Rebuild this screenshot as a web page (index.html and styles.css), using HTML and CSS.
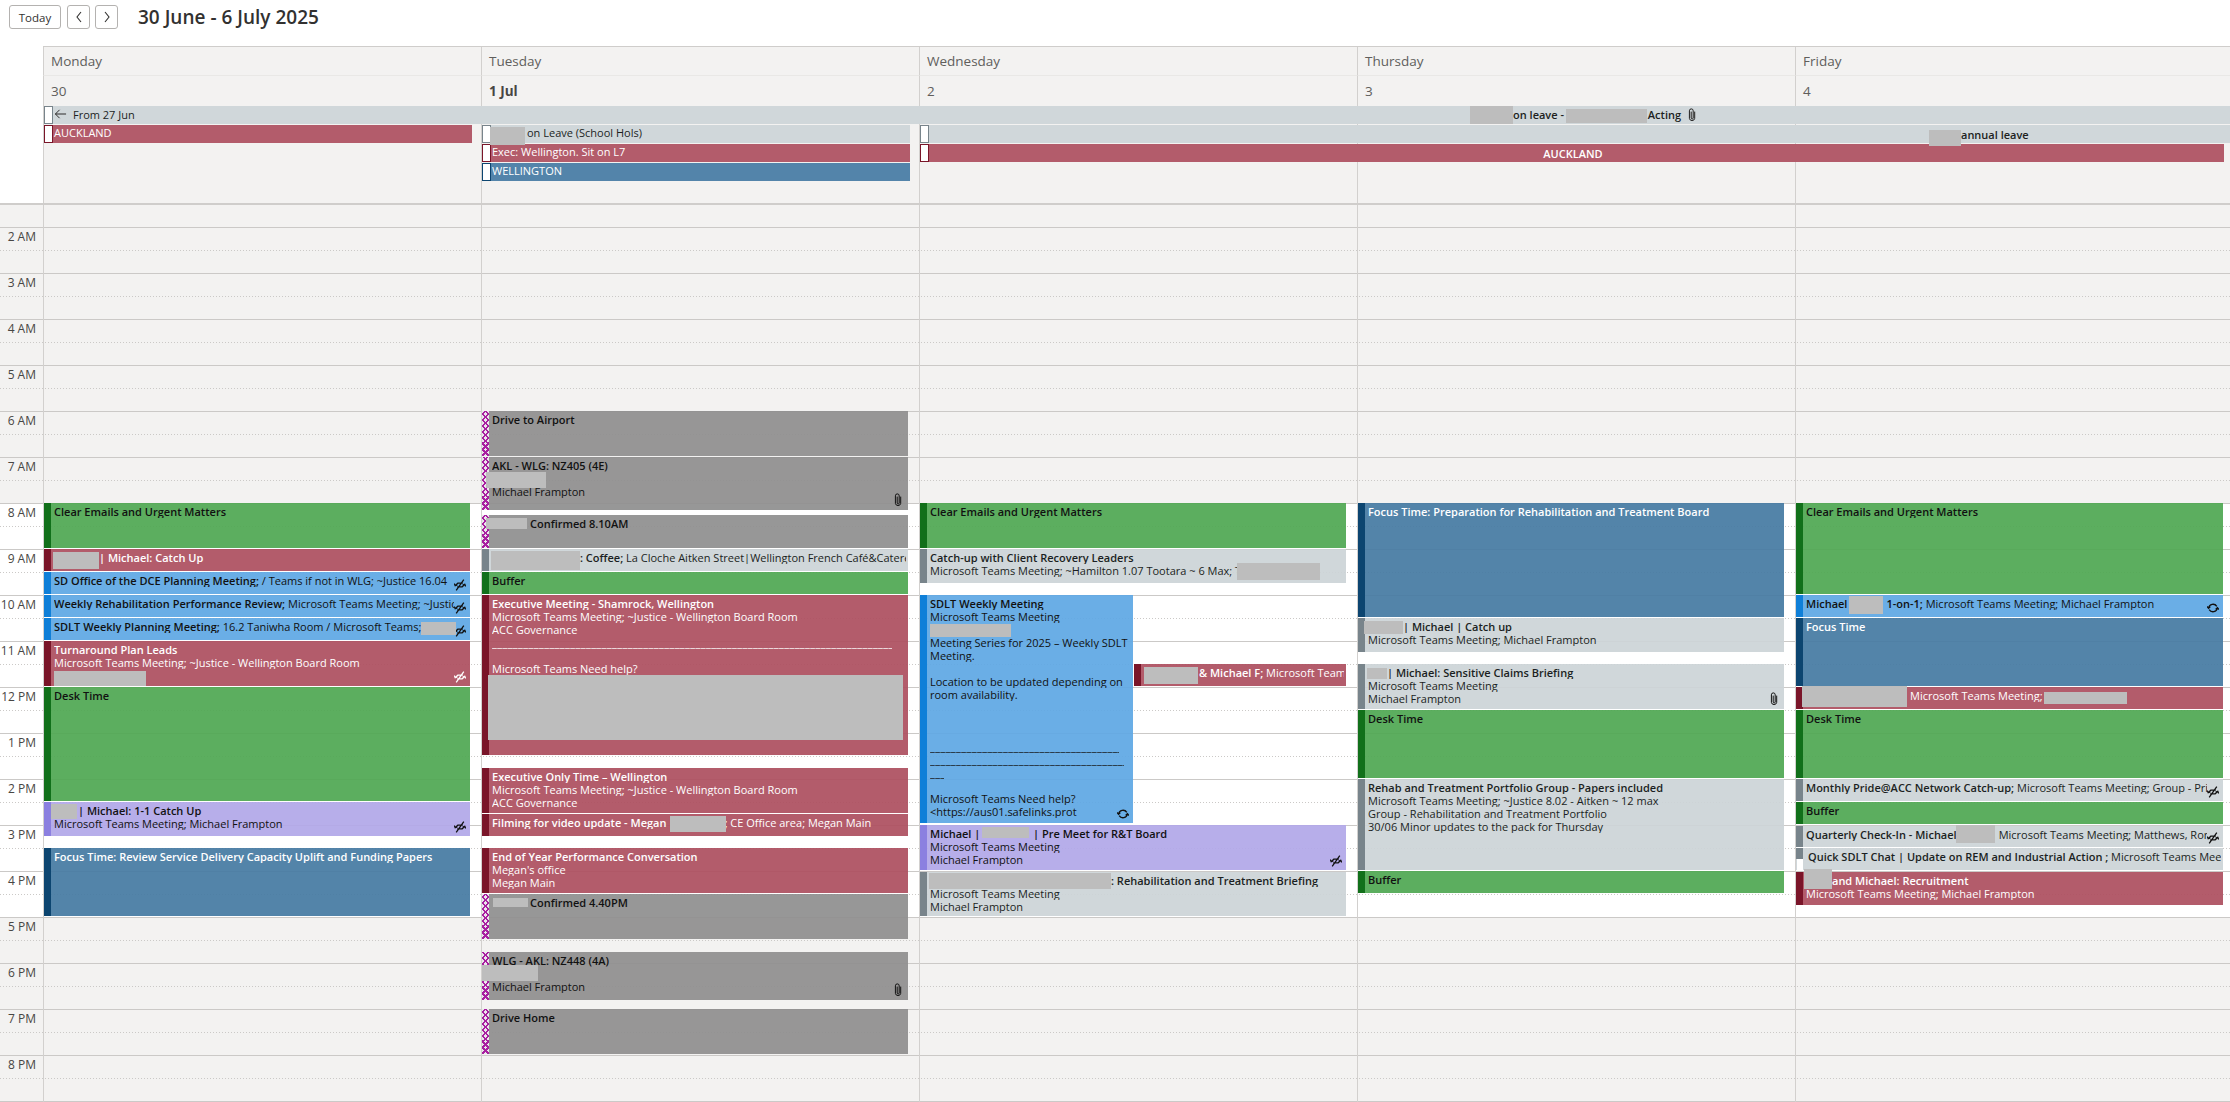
FILE: index.html
```html
<!DOCTYPE html>
<html lang="en">
<head>
<meta charset="utf-8">
<title>Calendar - Work week</title>
<link rel="stylesheet" href="styles.css">
</head>
<body>
<svg class="defs" aria-hidden="true">
  <symbol id="nosync" viewBox="0 0 12 12">
    <path d="M1.2 6.800 3.800 4.200H8.800M0.300 4.600l.9 2.200 2.200-.8M10.800 5.200 8.200 7.800H3.200M11.700 7.400l-.9-2.200-2.200.8M2.200 11.300 9.800.7" fill="none" stroke="currentColor" stroke-width="1.300"/>
  </symbol>
  <symbol id="sync" viewBox="0 0 12 12">
    <path d="M1.600 6A4.400 4.200 0 0 1 9.800 4.400M10.400 6A4.400 4.200 0 0 1 2.200 7.600M0 4.400 1.600 6.400 3.400 4.600M12 7.600 10.400 5.600 8.600 7.400" fill="none" stroke="currentColor" stroke-width="1.300"/>
  </symbol>
  <symbol id="clip" viewBox="0 0 8 14">
    <path d="M3.200 3.600V10a1 1 0 0 0 2 0V2.800a1.900 1.900 0 0 0-3.800 0V10.400a2.700 2.700 0 0 0 5.300 0V3.600" fill="none" stroke="currentColor" stroke-width="1"/>
  </symbol>
</svg>

<header class="top">
  <button class="btn today">Today</button>
  <button class="btn nav"><svg viewBox="0 0 10 14"><path d="M7 2 3 7l4 5" fill="none" stroke="currentColor" stroke-width="1.100"/></svg></button>
  <button class="btn nav"><svg viewBox="0 0 10 14"><path d="m3 2 4 5-4 5" fill="none" stroke="currentColor" stroke-width="1.100"/></svg></button>
  <h1 class="title">30 June - 6 July 2025</h1>
</header>

<section class="head">
  <div class="corner"></div>
  <div class="col c1"></div><div class="col c2"></div><div class="col c3"></div><div class="col c4"></div><div class="col c5"></div>

  <div class="dn c1">Monday</div><div class="dn c2">Tuesday</div><div class="dn c3">Wednesday</div><div class="dn c4">Thursday</div><div class="dn c5">Friday</div>
  <div class="dt c1">30</div><div class="dt c2 cur">1 Jul</div><div class="dt c3">2</div><div class="dt c4">3</div><div class="dt c5">4</div>

  <div class="ad n r1 from1">
    <svg class="arrow" viewBox="0 0 14 12"><path d="M13 6H1.500M6 1.500 1.500 6 6 10.500" fill="none" stroke="currentColor" stroke-width="1"/></svg>
    <span class="from">From 27 Jun</span>
    <strong class="ad-mid">on leave - <i class="gap" style="width:81px"></i>Acting</strong>
    <svg class="ic-inline"><use href="#clip"/></svg>
  </div>
  <div class="ad r c1 r2 end">AUCKLAND</div>
  <div class="ad n c2 r2 end"><i class="gap" style="width:35px"></i>on Leave (School Hols)</div>
  <div class="ad n wf r2"><strong class="ad-late">annual leave</strong></div>
  <div class="ad r c2 r3 end">Exec: Wellington. Sit on L7</div>
  <div class="ad r wf r3 endf"><strong class="ad-center">AUCKLAND</strong></div>
  <div class="ad s c2 r4 end">WELLINGTON</div>

  <i class="rd" style="left:490px;top:80px;width:35px;height:18px"></i>
  <i class="rd" style="left:1470px;top:59px;width:43px;height:18px"></i>
  <i class="rd" style="left:1566px;top:62px;width:81px;height:14px"></i>
  <i class="rd" style="left:1929px;top:83px;width:32px;height:16px"></i>
</section>

<section class="grid">
  <div class="rows">
    <div class="hr first"></div>
    <div class="hr"><span>2 AM</span></div>
    <div class="hr"><span>3 AM</span></div>
    <div class="hr"><span>4 AM</span></div>
    <div class="hr"><span>5 AM</span></div>
    <div class="hr"><span>6 AM</span></div>
    <div class="hr"><span>7 AM</span></div>
    <div class="hr work"><span>8 AM</span></div>
    <div class="hr work"><span>9 AM</span></div>
    <div class="hr work"><span>10 AM</span></div>
    <div class="hr work"><span>11 AM</span></div>
    <div class="hr work"><span>12 PM</span></div>
    <div class="hr work"><span>1 PM</span></div>
    <div class="hr work"><span>2 PM</span></div>
    <div class="hr work"><span>3 PM</span></div>
    <div class="hr work"><span>4 PM</span></div>
    <div class="hr"><span>5 PM</span></div>
    <div class="hr"><span>6 PM</span></div>
    <div class="hr"><span>7 PM</span></div>
    <div class="hr"><span>8 PM</span></div>
  </div>

  <div class="day c1">
    <article class="ev g" style="top:298px;height:45px"><div class="l"><b>Clear Emails and Urgent Matters</b></div></article>
    <article class="ev r" style="top:344px;height:22px"><div class="l"><i class="gap" style="width:45px"></i><b>| Michael: Catch Up</b></div></article>
    <article class="ev b ico" style="top:367px;height:22px"><div class="l"><b>SD Office of the DCE Planning Meeting;</b> / Teams if not in WLG; ~Justice 16.04</div><svg class="ic ns"><use href="#nosync"/></svg></article>
    <article class="ev b ico" style="top:390px;height:22px"><div class="l"><b>Weekly Rehabilitation Performance Review;</b> Microsoft Teams Meeting; ~Justice - Wellington</div><svg class="ic ns"><use href="#nosync"/></svg></article>
    <article class="ev b ico" style="top:413px;height:22px"><div class="l"><b>SDLT Weekly Planning Meeting;</b> 16.2 Taniwha Room / Microsoft Teams;</div><svg class="ic ns"><use href="#nosync"/></svg></article>
    <article class="ev r" style="top:436px;height:45px"><div class="l"><b>Turnaround Plan Leads</b></div><div class="l">Microsoft Teams Meeting; ~Justice - Wellington Board Room</div><svg class="ic ns"><use href="#nosync"/></svg></article>
    <article class="ev g" style="top:482px;height:114px"><div class="l"><b>Desk Time</b></div></article>
    <article class="ev p" style="top:597px;height:34px"><div class="l"><i class="gap" style="width:24px"></i><b>| Michael: 1-1 Catch Up</b></div><div class="l">Microsoft Teams Meeting; Michael Frampton</div><svg class="ic ns"><use href="#nosync"/></svg></article>
    <article class="ev s" style="top:643px;height:68px"><div class="l"><b>Focus Time: Review Service Delivery Capacity Uplift and Funding Papers</b></div></article>
    <i class="rd" style="left:9px;top:347px;width:46px;height:17px"></i>
    <i class="rd" style="left:377px;top:417px;width:35px;height:13px"></i>
    <i class="rd" style="left:10px;top:466px;width:92px;height:15px"></i>
    <i class="rd" style="left:7px;top:599px;width:26px;height:15px"></i>
  </div>

  <div class="day c2">
    <article class="ev h" style="top:206px;height:45px"><div class="l"><b>Drive to Airport</b></div></article>
    <article class="ev h" style="top:252px;height:53px"><div class="l"><b>AKL - WLG: NZ405 (4E)</b></div><div class="l">&nbsp;</div><div class="l">Michael Frampton</div><svg class="ic cl"><use href="#clip"/></svg></article>
    <article class="ev h" style="top:310px;height:33px"><div class="l"><i class="gap" style="width:38px"></i><b>Confirmed 8.10AM</b></div></article>
    <article class="ev n" style="top:344px;height:22px"><div class="l"><i class="gap" style="width:88px"></i><b>: Coffee;</b> La Cloche Aitken Street|Wellington French Café&amp;Caterers</div></article>
    <article class="ev g" style="top:367px;height:22px"><div class="l"><b>Buffer</b></div></article>
    <article class="ev r" style="top:390px;height:160px"><div class="l"><b>Executive Meeting - Shamrock, Wellington</b></div><div class="l">Microsoft Teams Meeting; ~Justice - Wellington Board Room</div><div class="l">ACC Governance</div><div class="l rule w400">________________________________________________________________________________________</div><div class="l">&nbsp;</div><div class="l">Microsoft Teams Need help?</div></article>
    <article class="ev r" style="top:563px;height:45px"><div class="l"><b>Executive Only Time – Wellington</b></div><div class="l">Microsoft Teams Meeting; ~Justice - Wellington Board Room</div><div class="l">ACC Governance</div></article>
    <article class="ev r" style="top:609px;height:22px"><div class="l"><b>Filming for video update - Megan</b><i class="gap" style="width:58px"></i><b>;</b> CE Office area; Megan Main</div></article>
    <article class="ev r" style="top:643px;height:45px"><div class="l"><b>End of Year Performance Conversation</b></div><div class="l">Megan's office</div><div class="l">Megan Main</div></article>
    <article class="ev h" style="top:689px;height:45px"><div class="l"><i class="gap" style="width:38px"></i><b>Confirmed 4.40PM</b></div></article>
    <article class="ev h" style="top:747px;height:48px"><div class="l"><b>WLG - AKL: NZ448 (4A)</b></div><div class="l">&nbsp;</div><div class="l">Michael Frampton</div><svg class="ic cl"><use href="#clip"/></svg></article>
    <article class="ev h" style="top:804px;height:45px"><div class="l"><b>Drive Home</b></div></article>
    <i class="rd" style="left:4px;top:267px;width:60px;height:16px"></i>
    <i class="rd" style="left:4px;top:313px;width:41px;height:11px"></i>
    <i class="rd" style="left:9px;top:346px;width:89px;height:19px"></i>
    <i class="rd" style="left:6px;top:470px;width:415px;height:65px"></i>
    <i class="rd" style="left:188px;top:611px;width:56px;height:16px"></i>
    <i class="rd" style="left:11px;top:693px;width:35px;height:9px"></i>
    <i class="rd" style="left:0;top:760px;width:56px;height:16px"></i>
  </div>

  <div class="day c3">
    <article class="ev g" style="top:298px;height:45px"><div class="l"><b>Clear Emails and Urgent Matters</b></div></article>
    <article class="ev n" style="top:344px;height:34px"><div class="l"><b>Catch-up with Client Recovery Leaders</b></div><div class="l">Microsoft Teams Meeting; ~Hamilton 1.07 Tootara ~ 6 Max; T</div></article>
    <article class="ev b half" style="top:390px;height:228px">
      <div class="l"><b>SDLT Weekly Meeting</b></div><div class="l">Microsoft Teams Meeting</div><div class="l">&nbsp;</div>
      <div class="l">Meeting Series for 2025 – Weekly SDLT</div><div class="l">Meeting.</div><div class="l">&nbsp;</div>
      <div class="l">Location to be updated depending on</div><div class="l">room availability.</div>
      <div class="l">&nbsp;</div><div class="l">&nbsp;</div><div class="l">&nbsp;</div>
      <div class="l rule w189">________________________________________________</div>
      <div class="l rule w194">________________________________________________</div>
      <div class="l rule w14">___________</div>
      <div class="l">&nbsp;</div>
      <div class="l">Microsoft Teams Need help?</div>
      <div class="l">&lt;https://aus01.safelinks.prot</div>
      <svg class="ic sy"><use href="#sync"/></svg>
    </article>
    <article class="ev r rest" style="top:459px;height:22px"><div class="l"><i class="gap" style="width:55px"></i><b>&amp; Michael F;</b> Microsoft Teams Meeting</div></article>
    <article class="ev p" style="top:620px;height:45px"><div class="l"><b>Michael | <i class="gap" style="width:47px"></i> | Pre Meet for R&amp;T Board</b></div><div class="l">Microsoft Teams Meeting</div><div class="l">Michael Frampton</div><svg class="ic ns"><use href="#nosync"/></svg></article>
    <article class="ev n" style="top:667px;height:44px"><div class="l"><i class="gap" style="width:181px"></i><b>: Rehabilitation and Treatment Briefing</b></div><div class="l">Microsoft Teams Meeting</div><div class="l">Michael Frampton</div></article>
    <i class="rd" style="left:317px;top:358px;width:83px;height:17px"></i>
    <i class="rd" style="left:10px;top:419px;width:81px;height:13px"></i>
    <i class="rd" style="left:224px;top:462px;width:54px;height:17px"></i>
    <i class="rd" style="left:62px;top:622px;width:47px;height:11px"></i>
    <i class="rd" style="left:9px;top:668px;width:182px;height:16px"></i>
  </div>

  <div class="day c4">
    <article class="ev s" style="top:298px;height:114px"><div class="l"><b>Focus Time: Preparation for Rehabilitation and Treatment Board</b></div></article>
    <article class="ev n" style="top:413px;height:34px"><div class="l"><i class="gap" style="width:35px"></i><b>| Michael | Catch up</b></div><div class="l">Microsoft Teams Meeting; Michael Frampton</div></article>
    <article class="ev n" style="top:459px;height:45px"><div class="l"><i class="gap" style="width:19px"></i><b>| Michael: Sensitive Claims Briefing</b></div><div class="l">Microsoft Teams Meeting</div><div class="l">Michael Frampton</div><svg class="ic cl"><use href="#clip"/></svg></article>
    <article class="ev g" style="top:505px;height:68px"><div class="l"><b>Desk Time</b></div></article>
    <article class="ev n" style="top:574px;height:91px"><div class="l"><b>Rehab and Treatment Portfolio Group - Papers included</b></div><div class="l">Microsoft Teams Meeting; ~Justice 8.02 - Aitken ~ 12 max</div><div class="l">Group - Rehabilitation and Treatment Portfolio</div><div class="l">30/06 Minor updates to the pack for Thursday</div></article>
    <article class="ev g" style="top:666px;height:22px"><div class="l"><b>Buffer</b></div></article>
    <i class="rd" style="left:6px;top:416px;width:39px;height:13px"></i>
    <i class="rd" style="left:9px;top:463px;width:20px;height:11px"></i>
  </div>

  <div class="day c5">
    <article class="ev g" style="top:298px;height:91px"><div class="l"><b>Clear Emails and Urgent Matters</b></div></article>
    <article class="ev b" style="top:390px;height:22px"><div class="l"><b>Michael<i class="gap" style="width:39px"></i>1-on-1;</b> Microsoft Teams Meeting; Michael Frampton</div><svg class="ic sy"><use href="#sync"/></svg></article>
    <article class="ev s" style="top:413px;height:68px"><div class="l"><b>Focus Time</b></div></article>
    <article class="ev r" style="top:482px;height:22px"><div class="l"><i class="gap" style="width:104px"></i>Microsoft Teams Meeting;</div></article>
    <article class="ev g" style="top:505px;height:68px"><div class="l"><b>Desk Time</b></div></article>
    <article class="ev n ico" style="top:574px;height:22px"><div class="l"><b>Monthly Pride@ACC Network Catch-up;</b> Microsoft Teams Meeting; Group - Pride</div><svg class="ic ns"><use href="#nosync"/></svg></article>
    <article class="ev g" style="top:597px;height:22px"><div class="l"><b>Buffer</b></div></article>
    <article class="ev n ico" style="top:621px;height:21px"><div class="l"><b>Quarterly Check-In - Michael</b><i class="gap" style="width:42px"></i>Microsoft Teams Meeting; Matthews, Ron</div><svg class="ic ns"><use href="#nosync"/></svg></article>
    <article class="ev n short" style="top:643px;height:22px"><div class="l"><b>Quick SDLT Chat | Update on REM and Industrial Action ;</b> Microsoft Teams Meeting</div></article>
    <article class="ev r" style="top:667px;height:33px"><div class="l"><i class="gap" style="width:26px"></i><b>and Michael: Recruitment</b></div><div class="l">Microsoft Teams Meeting; Michael Frampton</div></article>
    <i class="rd" style="left:53px;top:391px;width:34px;height:18px"></i>
    <i class="rd" style="left:6px;top:481px;width:105px;height:21px"></i>
    <i class="rd" style="left:248px;top:487px;width:83px;height:12px"></i>
    <i class="rd" style="left:160px;top:620px;width:39px;height:18px"></i>
    <i class="rd" style="left:8px;top:664px;width:28px;height:20px"></i>
  </div>
</section>
</body>
</html>
```
FILE: styles.css
```css
* { box-sizing: border-box; }
html, body { margin: 0; height: 100%; overflow: hidden; background: #fff; }
body { font-family: "Open Sans", "Noto Sans", sans-serif; color: #201f1e; width: 2230px; height: 1102px; }
.defs { display: none; }

/* toolbar */
.top { display: flex; align-items: flex-start; height: 46px; padding: 5px 0 0 9px; }
.btn { height: 24px; padding: 0; background: #fff; border: 1px solid #b4b2b0; border-radius: 3px; font: 11.500px "Open Sans", sans-serif; color: #323130; display: flex; align-items: center; justify-content: center; }
.today { width: 52px; margin-right: 6px; }
.nav { width: 23px; margin-right: 5px; }
.nav svg { width: 10px; height: 14px; }
.title { margin: 0 0 0 15px; font-size: 19px; line-height: 24px; font-weight: 600; color: #323130; }

/* shared column template */
.head, .grid { display: grid; grid-template-columns: 43px repeat(4, 438px) 1fr; }
.c1 { grid-column: 2; } .c2 { grid-column: 3; } .c3 { grid-column: 4; } .c4 { grid-column: 5; } .c5 { grid-column: 6; }

/* header */
.head { position: relative; grid-template-rows: 29px 30px repeat(4, 19px) 21px; border-top: 1px solid #cfcdcb; border-bottom: 2px solid #cfcdcb; height: 159px; }
.corner { grid-column: 1; grid-row: 1 / -1; background: #fff; margin-top: -1px; }
.col { grid-row: 1 / -1; background: #f3f2f1; border-left: 1px solid #d2d0ce; }
.dn { grid-row: 1; font-size: 13.500px; line-height: 29px; padding-left: 7px; color: #605e5c; border-left: 1px solid #d2d0ce; border-bottom: 1px solid #e9e8e6; }
.dt { grid-row: 2; font-size: 13.500px; line-height: 30px; padding-left: 8px; color: #605e5c; }
.dt.cur { font-weight: 700; color: #484644; }

.ad { position: relative; height: 18px; margin-left: 1px; padding: 1px 0 0 10px; font-size: 11px; line-height: 13px; white-space: nowrap; overflow: hidden; }
.ad::before { content: ""; position: absolute; left: 0; top: 0; bottom: 0; width: 7px; background: #fff; border: 1px solid var(--bar); }
.r1 { grid-row: 3; grid-column: 2 / -1; } .r2 { grid-row: 4; } .r3 { grid-row: 5; } .r4 { grid-row: 6; }
.wf { grid-column: 4 / -1; }
.end { margin-right: 9px; }
.endf { margin-right: 6px; }
.ad.n { --bar: #78848b; background: #d0d7da; color: #201f1e; }
.ad.r { --bar: #7a1529; background: #b35c6b; color: #fff; }
.ad.s { --bar: #0c4570; background: #5384aa; color: #fff; }
.from1 { display: flex; align-items: center; padding: 0 0 2px 10px; }
.arrow { width: 13px; height: 12px; flex: none; }
.from { margin-left: 6px; }
.ad-mid { font-weight: 600; position: absolute; left: 1469px; top: 2px; }
.ic-inline { position: absolute; left: 1644px; top: 2px; width: 8px; height: 14px; }
.ad-late { position: absolute; left: 1041px; top: 3px; font-weight: 600; }
.ad-center { display: block; text-align: center; font-weight: 600; margin-left: -8px; line-height: 18px; }

/* time grid */
.grid { position: relative; height: 897px; }
.rows { grid-column: 1 / -1; grid-row: 1; border-bottom: 1px solid #cbc9c7; }
.hr { position: relative; height: 46px; background: #f3f2f1; border-top: 1px solid #cbc9c7; }
.hr::after { content: ""; position: absolute; left: 0; right: 0; top: 22px; height: 1px; background: repeating-linear-gradient(90deg, #cbc9c7 0 1px, transparent 1px 3px); }
.hr.work { background: #fff; }
.hr.first { height: 22px; border-top: 0; }
.hr.first::after { display: none; }
.hr span { display: block; width: 36px; text-align: right; font-size: 12px; line-height: 15px; padding-top: 1px; color: #484644; white-space: nowrap; }

.day { grid-row: 1; position: relative; border-left: 1px solid #d2d0ce; }

/* events sit on the time canvas; slightly translucent so the grid shows through */
.ev { position: absolute; left: 0; width: 426px; padding: 2px 2px 0 10px; font-size: 11px; line-height: 13px; overflow: hidden; }
.c5 .ev { width: 427px; }
.ev::before { content: ""; position: absolute; left: 0; top: 0; bottom: 0; width: 7px; background: var(--bar); }
.ev.g { --bar: #11701a; background: rgba(80, 168, 83, .93); color: #111; }
.ev.b { --bar: #0f7fd8; background: rgba(95, 168, 228, .93); color: #111; }
.ev.p { --bar: #8b80e0; background: rgba(178, 168, 232, .93); color: #111; }
.ev.n { --bar: #78848b; background: rgba(204, 212, 215, .93); color: #1b1f22; }
.ev.r { --bar: #7a1529; background: rgba(173, 80, 96, .93); color: #fff; }
.ev.s { --bar: #0c4570; background: rgba(70, 123, 163, .93); color: #fff; }
.ev.h { background: rgba(143, 143, 143, .93); color: #111; }
.ev.h::before {
  background:
    repeating-linear-gradient(45deg, #a81fa0 0 1.500px, transparent 1.500px 4.200px),
    repeating-linear-gradient(-45deg, #a81fa0 0 1.500px, transparent 1.500px 4.200px),
    #ece6ec;
}
.ev.half { width: 213px; }
.ev.rest { left: 214px; width: 212px; }
.ev.short { padding-left: 12px; }
.ev.short::before { bottom: auto; height: 11px; }
.ev.short::after { content: ""; position: absolute; left: 1px; top: 11px; bottom: 0; width: 6px; background: #fff; }

.l { white-space: nowrap; overflow: hidden; }
.ico .l { margin-right: 14px; }
.ev b { font-weight: 600; }
.rule { height: 13px; letter-spacing: .4px; }
.w400 { width: 400px; } .w189 { width: 189px; } .w194 { width: 194px; } .w14 { width: 14px; }

.gap { display: inline-block; }
.rd { position: absolute; background: #bdbdbd; }

.ic { position: absolute; bottom: 3px; color: #111; }
.ev.r .ic { color: #fff; }
.ns { right: 4px; width: 12px; height: 12px; }
.sy { right: 4px; width: 12px; height: 12px; }
.cl { right: 6px; width: 8px; height: 14px; }
```
